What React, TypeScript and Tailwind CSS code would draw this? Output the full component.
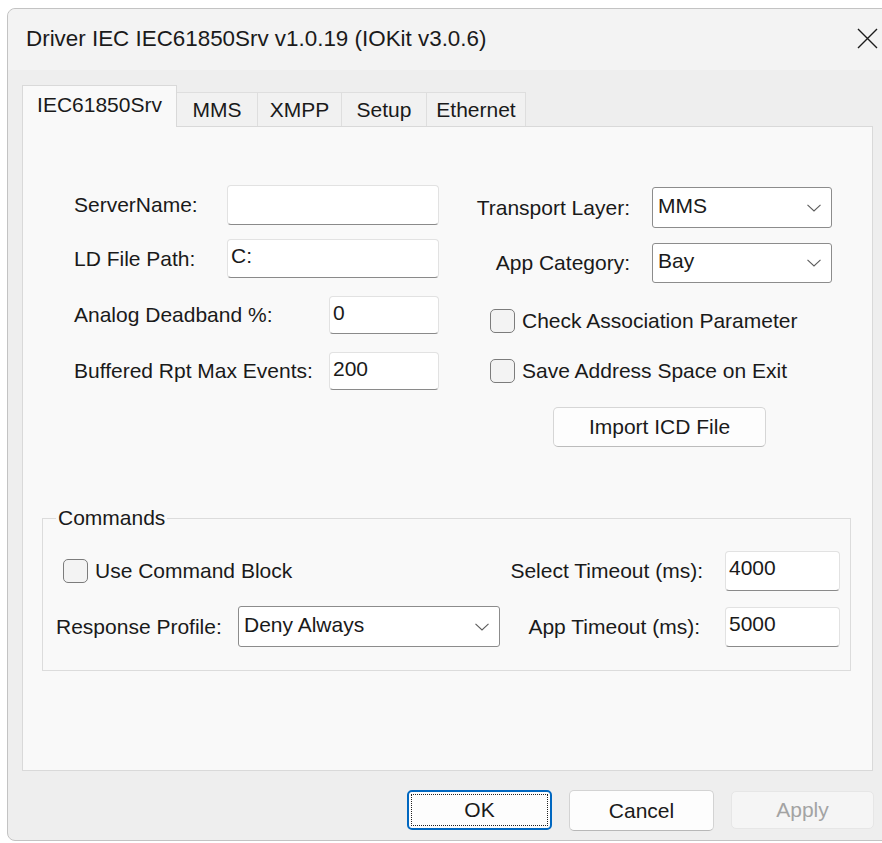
import type { ReactNode } from 'react';

function TextBox({ value, className }: { value?: string; className: string }) {
  return (
    <div
      className={`${className} bg-white border border-[#e2e2e2] border-b-[#8a8a8a] rounded-[4px] pl-[3px] pt-[4px] leading-[24px]`}
    >
      {value}
    </div>
  );
}

function Select({ value, className }: { value: string; className: string }) {
  return (
    <div
      className={`${className} flex items-center bg-white border border-[#8c8c8c] rounded-[3px] pl-[5px] pr-[10px]`}
    >
      <span className="flex-1 leading-[24px] -mt-[4px]">{value}</span>
      <svg width="14" height="8" viewBox="0 0 14 8">
        <path d="M0.5 0.8 L7 7 L13.5 0.8" fill="none" stroke="#5c5c5c" strokeWidth="1.1" />
      </svg>
    </div>
  );
}

function CheckBox({ children, className = '' }: { children: ReactNode; className?: string }) {
  return (
    <div className={`flex items-center ${className}`}>
      <span className="w-[25px] h-[24px] rounded-[5px] border-[1.5px] border-[#7c7c7c] bg-[#f3f3f3]" />
      <span className="ml-[7px] leading-[24px]">{children}</span>
    </div>
  );
}

const tabs = [
  { label: 'MMS', w: 'w-[81px]' },
  { label: 'XMPP', w: 'w-[84px]' },
  { label: 'Setup', w: 'w-[85px]' },
  { label: 'Ethernet', w: 'w-[99px]' },
];

export default function App() {
  return (
    <div className="w-[882px] h-[843px] overflow-hidden bg-white pt-[8px] pl-[7px] text-[21px] text-[#1a1a1a] font-['Liberation_Sans',Arial,sans-serif]">
      <div className="w-[910px] h-[833px] bg-[#eeeeee] border border-[#c3c3c3] rounded-[8px] flex flex-col">
        {/* title bar */}
        <div className="h-[61px] shrink-0 bg-[#f3f3f3] rounded-t-[8px] flex items-center pl-[18px]">
          <span className="flex-1 text-[22.4px] leading-[24px] -mt-[2px]">Driver IEC IEC61850Srv v1.0.19 (IOKit v3.0.6)</span>
          <svg width="21" height="21" viewBox="0 0 21 21" className="mr-[38px] -mt-[3px]">
            <path d="M1 1 L20 20 M20 1 L1 20" stroke="#1c1c1c" strokeWidth="1.4" />
          </svg>
        </div>

        <div className="pl-[14px] pt-[15px]">
          {/* tabs */}
          <div className="flex items-end h-[41px]">
            <div className="relative z-10 w-[155px] h-[42px] -mb-[1px] bg-[#f9f9f9] border border-b-0 border-[#d9d9d9] flex items-center justify-center pb-[4px]">
              IEC61850Srv
            </div>
            {tabs.map((t) => (
              <div
                key={t.label}
                className={`${t.w} h-[34px] bg-[#f1f1f1] border border-l-0 border-b-0 border-[#dedede] flex items-center justify-center`}
              >
                {t.label}
              </div>
            ))}
          </div>

          {/* tab page */}
          <div className="w-[851px] h-[645px] bg-[#f9f9f9] border border-[#d9d9d9] flex flex-col">
            <div className="flex pl-[51px]">
              <div className="w-[365px] flex flex-col pt-[58px]">
                <div className="flex items-center">
                  <span className="w-[153px] leading-[24px]">ServerName:</span>
                  <TextBox className="w-[212px] h-[40px]" />
                </div>
                <div className="flex items-center mt-[14px]">
                  <span className="w-[153px] leading-[24px]">LD File Path:</span>
                  <TextBox className="w-[212px] h-[39px]" value="C:" />
                </div>
                <div className="flex items-center mt-[18px]">
                  <span className="w-[255px] leading-[24px]">Analog Deadband %:</span>
                  <TextBox className="w-[110px] h-[38px]" value="0" />
                </div>
                <div className="flex items-center mt-[18px]">
                  <span className="w-[255px] leading-[24px]">Buffered Rpt Max Events:</span>
                  <TextBox className="w-[110px] h-[38px]" value="200" />
                </div>
              </div>

              <div className="ml-[31px] flex flex-col pt-[60px]">
                <div className="flex items-center">
                  <span className="w-[160px] text-right leading-[24px]">Transport Layer:</span>
                  <Select className="ml-[22px] w-[180px] h-[41px]" value="MMS" />
                </div>
                <div className="flex items-center mt-[15px]">
                  <span className="w-[160px] text-right leading-[24px]">App Category:</span>
                  <Select className="ml-[22px] w-[180px] h-[40px]" value="Bay" />
                </div>
                <CheckBox className="mt-[26px] ml-[20px]">Check Association Parameter</CheckBox>
                <CheckBox className="mt-[26px] ml-[20px]">Save Address Space on Exit</CheckBox>
                <button className="mt-[24px] ml-[83px] w-[213px] h-[40px] rounded-[5px] bg-[#fdfdfd] border border-[#d6d6d6] border-b-[#bcbcbc] leading-[24px]">
                  Import ICD File
                </button>
              </div>
            </div>

            {/* commands group */}
            <fieldset className="mt-[59px] ml-[19px] w-[809px] border border-[#dcdcdc] pb-[23px]">
              <legend className="ml-[13px] px-[2px] leading-[24px]">Commands</legend>
              <div className="flex items-center mt-[21px] pl-[13px] pr-[10px]">
                <CheckBox className="ml-[7px] flex-1">Use Command Block</CheckBox>
                <span className="w-[200px] text-right leading-[24px]">Select Timeout (ms):</span>
                <TextBox className="ml-[22px] w-[115px] h-[40px]" value="4000" />
              </div>
              <div className="flex items-center mt-[15px] pl-[13px] pr-[10px]">
                <span className="w-[182px] leading-[24px]">Response Profile:</span>
                <Select className="w-[262px] h-[41px]" value="Deny Always" />
                <span className="flex-1 text-right leading-[24px]">App Timeout (ms):</span>
                <TextBox className="ml-[25px] w-[115px] h-[40px]" value="5000" />
              </div>
            </fieldset>
          </div>

          {/* dialog buttons */}
          <div className="w-[852px] flex justify-end gap-[17px] mt-[19px]">
            <button className="w-[145px] h-[40px] rounded-[5px] border-2 border-[#0067c0] bg-[#fdfdfd] p-[2px]">
              <span className="flex w-full h-full items-center justify-center border border-dotted border-[#222]">OK</span>
            </button>
            <button className="w-[145px] h-[41px] rounded-[5px] bg-[#fdfdfd] border border-[#d3d3d3] border-b-[#b8b8b8]">
              Cancel
            </button>
            <button className="w-[143px] h-[38px] mt-[1px] rounded-[5px] bg-[#f5f5f5] border border-[#e6e6e6] text-[#a3a3a3]">
              Apply
            </button>
          </div>
        </div>
      </div>
    </div>
  );
}
